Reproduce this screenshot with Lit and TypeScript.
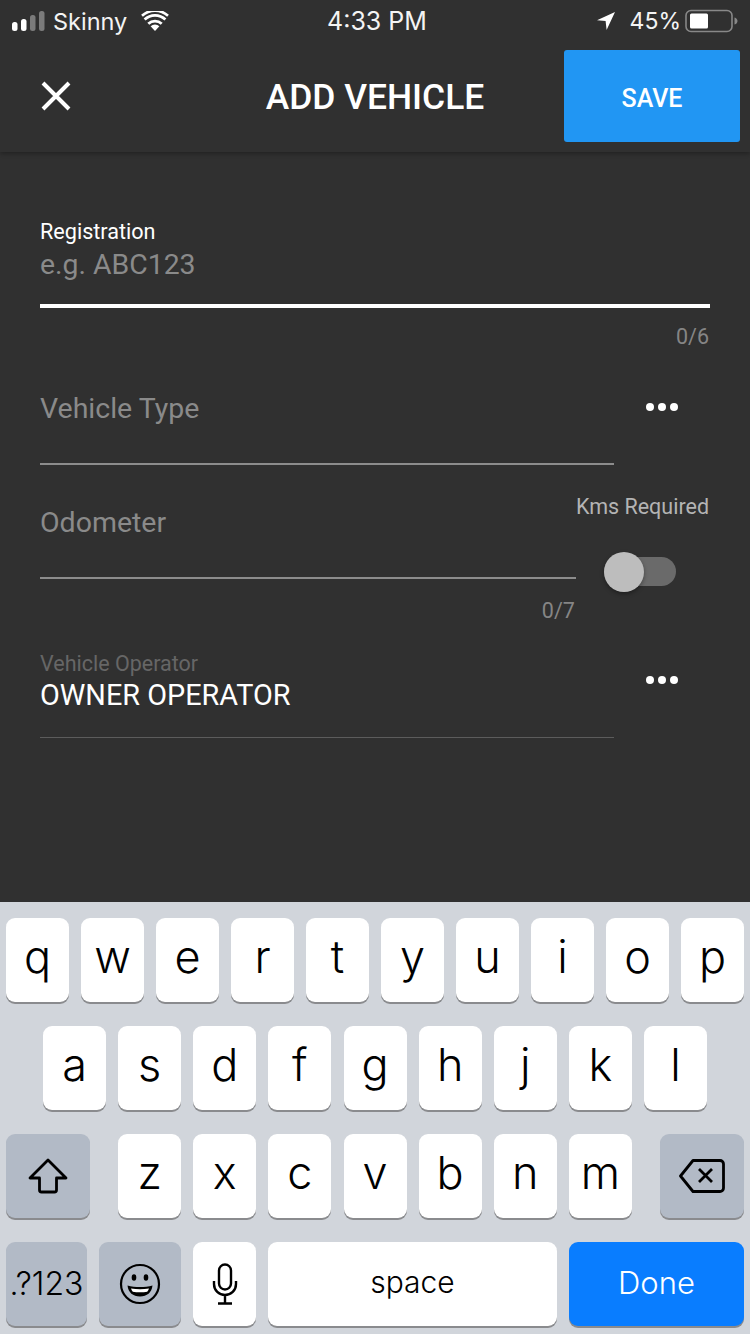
import { LitElement, html, css } from "lit";
import { customElement } from "lit/decorators.js";

const R1 = "qwertyuiop".split("");
const R2 = "asdfghjkl".split("");
const R3 = "zxcvbnm".split("");

@customElement("app-root")
export class AppRoot extends LitElement {
  static styles = css`
    :host { display: block; width: 750px; height: 1334px; background: #303030; font-family: Roboto, sans-serif; overflow: hidden; color: #fff; }
    * { box-sizing: border-box; }
    .page { display: flex; flex-direction: column; height: 1334px; }
    .top { height: 152px; flex: none; background: #303030; box-shadow: 0 2px 4px rgba(0,0,0,.28); position: relative; display: flex; flex-direction: column; }
    .status { height: 42px; flex: none; display: grid; grid-template-columns: 1fr auto 1fr; align-items: center; padding: 0 12px; font-family: Inter, sans-serif; font-size: 23px; color: #f4f4f4; }
    .s-left { display: flex; align-items: center; }
    .carrier { margin-left: 8px; font-size: 23.5px; }
    .wifi { margin-left: 14px; }
    .time { font-size: 25px; padding-left: 4px; }
    .s-right { display: flex; align-items: center; justify-content: flex-end; }
    .pct { margin-left: 15px; }
    .battery { margin-left: 4px; }
    .bar { flex: 1; display: grid; grid-template-columns: 1fr auto 1fr; padding: 8px 10px 0; align-items: start; }
    .close { width: 112px; height: 92px; margin-left: -10px; display: flex; align-items: center; justify-content: center; }
    .title { font-size: 35.4px; font-weight: 500; line-height: 94px; }
    .save { width: 176px; height: 92px; justify-self: end; background: #2196f3; border-radius: 3px; padding-top: 4px; font-size: 25px; font-weight: 500; display: flex; align-items: center; justify-content: center; }
    .form { flex: 1; padding: 68px 40px 0; display: flex; flex-direction: column; }
    .label { font-size: 21.6px; line-height: 24px; color: #fff; }
    .value { font-size: 28.4px; line-height: 36px; color: #8a8a8a; margin-top: 3px; }
    .line-strong { height: 4px; background: #fff; margin-top: 21px; }
    .count { font-size: 21.5px; line-height: 24px; color: #858585; text-align: right; margin-top: 17px; padding-right: 1px; }
    .row { display: flex; }
    .vt { margin-top: 42px; align-items: flex-start; justify-content: space-between; }
    .fieldcol { width: 574px; }
    .placeholder { font-size: 28.5px; line-height: 36px; color: #8a8a8a; }
    .line { height: 2px; background: #8c8c8c; margin-top: 36px; }
    .dots { display: flex; gap: 4px; margin-right: 32px; margin-top: 12px; }
    .dots i { width: 8px; height: 8px; border-radius: 50%; background: #fff; display: block; }
    .odo { margin-top: 24px; align-items: flex-start; justify-content: space-between; }
    .odocol { width: 536px; padding-top: 16px; }
    .odocount { margin-top: 20px; }
    .kms { display: flex; flex-direction: column; align-items: flex-end; padding-top: 6px; }
    .kmslabel { font-size: 21.5px; line-height: 24px; color: #b4b4b4; padding-right: 1px; }
    .toggle { width: 72px; height: 40px; position: relative; margin-top: 33px; margin-right: 34px; }
    .track { position: absolute; left: 0; right: 0; top: 5px; height: 29px; border-radius: 15px; background: #6a6a6a; }
    .thumb { position: absolute; left: 0; top: 0; width: 40px; height: 40px; border-radius: 50%; background: #bdbdbd; box-shadow: 0 2px 4px rgba(0,0,0,.35); }
    .op { margin-top: 29px; justify-content: space-between; align-items: flex-start; }
    .oplabel { font-size: 21.5px; line-height: 24px; color: #666; }
    .opvalue { font-size: 28.8px; line-height: 36px; color: #fff; margin-top: 1px; }
    .opline { height: 1px; background: #5c5c5c; margin-top: 24px; }
    .op .dots { margin-top: 24px; }

    .kb { height: 432px; flex: none; background: #d1d5db; padding: 16px 6px 0; display: flex; flex-direction: column; gap: 24px; font-family: Inter, "Liberation Sans", sans-serif; color: #000; }
    .kr { display: flex; height: 84px; gap: 12px; }
    .kr.r2 { padding-left: 37px; gap: 12.125px; }
    .kr.r3 { gap: 12.125px; }
    .k { width: 63px; height: 84px; flex: none; background: #fff; border-radius: 9px; box-shadow: 0 2px 0 #8a8b8e; font-size: 45px; font-weight: 300; display: flex; align-items: center; justify-content: center; line-height: 1; }
    .k.t { padding-bottom: 7px; }
    .k.g { background: #b2bac6; }
    .shift, .del { width: 84px; }
    .shift { margin-right: 16px; }
    .del { margin-left: 16px; }
    .num { width: 81px; font-size: 32px; font-weight: 300; }
    .emoji { width: 82px; }
    .space { width: 289px; font-size: 30px; font-weight: 300; padding-bottom: 4px; }
    .done { width: 175px; background: #097dff; color: #fff; font-size: 31px; font-weight: 300; padding-bottom: 4px; }
  `;

  render() {
    const dots = html`<div class="dots"><i></i><i></i><i></i></div>`;
    const keys = (list: string[]) => list.map((k) => html`<div class="k t">${k}</div>`);
    return html`<div class="page">
      <div class="top">
        <div class="status">
          <div class="s-left">
            <svg width="33" height="20" viewBox="0 0 33 20">
              <rect x="0" y="11" width="5.500" height="9" rx="2.500" fill="#fff"/>
              <rect x="9" y="8" width="5.500" height="12" rx="2.500" fill="#fff"/>
              <rect x="18" y="4" width="5.500" height="16" rx="2.500" fill="#7b7b7b"/>
              <rect x="27" y="0" width="5.500" height="20" rx="2.500" fill="#7b7b7b"/>
            </svg>
            <span class="carrier">Skinny</span>
            <svg class="wifi" width="28" height="20" viewBox="0 0 28 20">
              <path d="M14 20l-4.400-4.700a6.400 6.400 0 0 1 8.800 0z" fill="#fff"/>
              <path d="M7.300 12.800a9.800 9.800 0 0 1 13.400 0" fill="none" stroke="#fff" stroke-width="2.800"/>
              <path d="M3.600 8.600a15 15 0 0 1 20.800 0" fill="none" stroke="#fff" stroke-width="2.800"/>
              <path d="M1 4.800a19 19 0 0 1 26 0" fill="none" stroke="#fff" stroke-width="2.600"/>
            </svg>
          </div>
          <div class="time">4:33 PM</div>
          <div class="s-right">
            <svg width="18" height="18" viewBox="0 0 18 18"><path d="M18 0L0 8.200l8.600.9 1 8.900z" fill="#fff"/></svg>
            <span class="pct">45%</span>
            <svg class="battery" width="53" height="24" viewBox="0 0 53 24">
              <rect x="1" y="1.500" width="46" height="21" rx="5" fill="none" stroke="#888" stroke-width="1.600"/>
              <rect x="5" y="4.500" width="18" height="15" rx="1.500" fill="#fff"/>
              <path d="M49.500 8.500c2 .5 3 2 3 3.500s-1 3-3 3.500z" fill="#888"/>
            </svg>
          </div>
        </div>
        <div class="bar">
          <div class="close">
            <svg width="30" height="30" viewBox="0 0 30 30"><path d="M2 2L28 28M28 2L2 28" stroke="#fff" stroke-width="4" fill="none"/></svg>
          </div>
          <div class="title">ADD VEHICLE</div>
          <div class="save">SAVE</div>
        </div>
      </div>
      <div class="form">
        <div class="label">Registration</div>
        <div class="value">e.g. ABC123</div>
        <div class="line-strong"></div>
        <div class="count">0/6</div>
        <div class="row vt">
          <div class="fieldcol">
            <div class="placeholder">Vehicle Type</div>
            <div class="line"></div>
          </div>
          ${dots}
        </div>
        <div class="row odo">
          <div class="odocol">
            <div class="placeholder">Odometer</div>
            <div class="line"></div>
            <div class="count odocount">0/7</div>
          </div>
          <div class="kms">
            <div class="kmslabel">Kms Required</div>
            <div class="toggle"><div class="track"></div><div class="thumb"></div></div>
          </div>
        </div>
        <div class="row op">
          <div class="fieldcol">
            <div class="oplabel">Vehicle Operator</div>
            <div class="opvalue">OWNER OPERATOR</div>
            <div class="opline"></div>
          </div>
          ${dots}
        </div>
      </div>
      <div class="kb">
        <div class="kr">${keys(R1)}</div>
        <div class="kr r2">${keys(R2)}</div>
        <div class="kr r3">
          <div class="k g shift">
            <svg width="40" height="36" viewBox="0 0 40 36"><path d="M20 2L2 20h9.500v12a2 2 0 0 0 2 2h13a2 2 0 0 0 2-2V20H38z" fill="none" stroke="#000" stroke-width="2.800" stroke-linejoin="round"/></svg>
          </div>
          ${keys(R3)}
          <div class="k g del">
            <svg width="46" height="34" viewBox="0 0 46 34"><path d="M14 1.500h27a3.500 3.500 0 0 1 3.500 3.500v24a3.500 3.500 0 0 1-3.500 3.500H14L1.500 17z" fill="none" stroke="#000" stroke-width="2.800" stroke-linejoin="round"/><path d="M20 10l13 13M33 10L20 23" stroke="#000" stroke-width="2.800" fill="none"/></svg>
          </div>
        </div>
        <div class="kr">
          <div class="k g num">.?123</div>
          <div class="k g emoji">
            <svg width="42" height="42" viewBox="0 0 42 42">
              <circle cx="21" cy="21" r="19" fill="none" stroke="#000" stroke-width="2.200"/>
              <ellipse cx="15" cy="14.500" rx="2.300" ry="3.200"/>
              <ellipse cx="27" cy="14.500" rx="2.300" ry="3.200"/>
              <path d="M8.500 22.500c7.500 2 17.500 2 25 0-.8 7-5.500 11-12.500 11s-11.700-4-12.500-11z"/>
              <path d="M12 25.500c6 1.100 12 1.100 18 0-.4 1.300-1 2.400-1.800 3.300-4.200.7-10.200.7-14.400 0-.8-.9-1.400-2-1.800-3.300z" fill="#fff"/>
            </svg>
          </div>
          <div class="k">
            <svg width="26" height="42" viewBox="0 0 26 42">
              <rect x="7" y="1.500" width="12" height="25" rx="6" fill="none" stroke="#000" stroke-width="2.400"/>
              <path d="M2 18v3c0 6.500 5 11 11 11s11-4.500 11-11v-3M13 32v8M6 40.500h14" fill="none" stroke="#000" stroke-width="2.400"/>
            </svg>
          </div>
          <div class="k space">space</div>
          <div class="k done">Done</div>
        </div>
      </div>
    </div>`;
  }
}
